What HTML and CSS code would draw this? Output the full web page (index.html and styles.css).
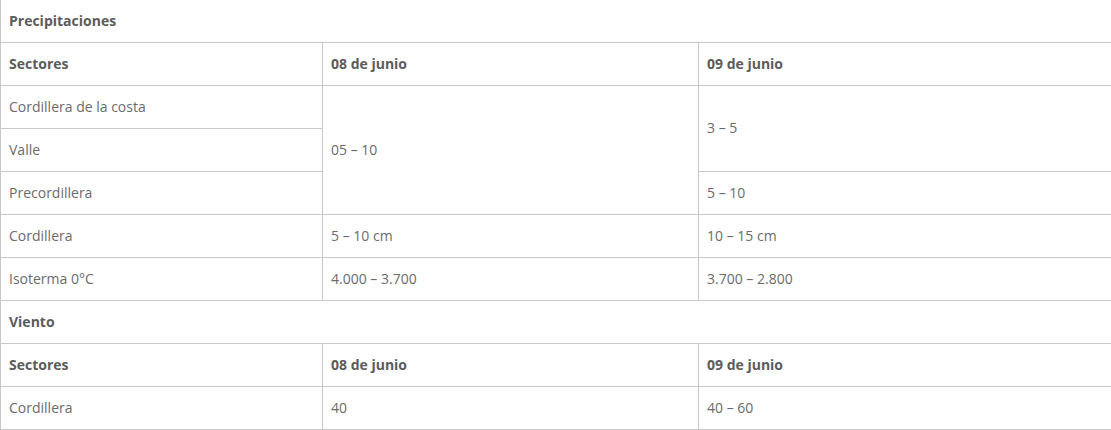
FILE: index.html
```html
<!DOCTYPE html>
<html lang="es">
<head>
    <meta charset="UTF-8">
    <meta name="viewport" content="width=device-width, initial-scale=1.0">
    <title>Pronóstico</title>
    <link rel="stylesheet" href="styles.css">
</head>
<body>
    <table class="forecast">
        <colgroup>
            <col class="c1">
            <col class="c2">
            <col class="c3">
        </colgroup>
        <tbody>
            <tr class="section">
                <th colspan="3">Precipitaciones</th>
            </tr>
            <tr class="head">
                <th>Sectores</th>
                <th>08 de junio</th>
                <th>09 de junio</th>
            </tr>
            <tr>
                <td>Cordillera de la costa</td>
                <td rowspan="3">05 – 10</td>
                <td rowspan="2">3 – 5</td>
            </tr>
            <tr>
                <td>Valle</td>
            </tr>
            <tr>
                <td>Precordillera</td>
                <td>5 – 10</td>
            </tr>
            <tr>
                <td>Cordillera</td>
                <td>5 – 10 cm</td>
                <td>10 – 15 cm</td>
            </tr>
            <tr>
                <td>Isoterma 0°C</td>
                <td>4.000 – 3.700</td>
                <td>3.700 – 2.800</td>
            </tr>
            <tr class="section">
                <th colspan="3">Viento</th>
            </tr>
            <tr class="head">
                <th>Sectores</th>
                <th>08 de junio</th>
                <th>09 de junio</th>
            </tr>
            <tr>
                <td>Cordillera</td>
                <td>40</td>
                <td>40 – 60</td>
            </tr>
        </tbody>
    </table>
</body>
</html>
```

FILE: styles.css
```css
* { box-sizing: border-box; }

body {
    margin: 0;
    background: #fff;
    font: 14px/1.4 "Open Sans", "Noto Sans", sans-serif;
    color: #6b6b6b;
}

.forecast {
    width: 1111px;
    border-collapse: collapse;
    table-layout: fixed;
}

.forecast th,
.forecast td {
    height: 43px;
    padding: 0 8px;
    border: 1px solid #c8c8c8;
    text-align: left;
    vertical-align: middle;
    font-weight: 400;
}

.forecast th {
    font-weight: 700;
    color: #5c5c5c;
}

/* first row has no visible top edge */
.forecast tr:first-child th {
    height: 42px;
    border-top: none;
}

.c1 { width: 322px; }
.c2 { width: 376px; }
.c3 { width: 413px; }
```
